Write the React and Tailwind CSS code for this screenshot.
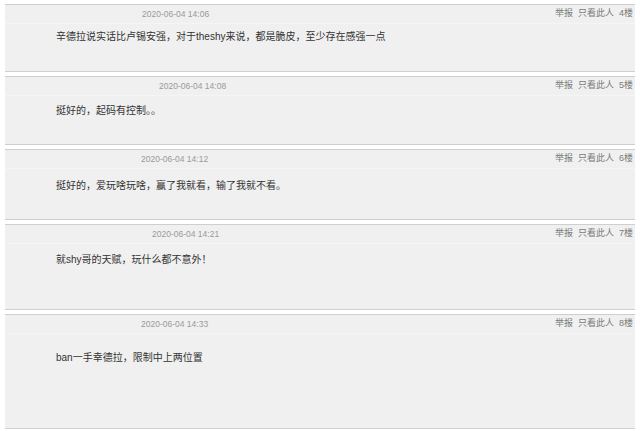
const posts = [
  { floor: 4, time: '2020-06-04 14:06', text: '辛德拉说实话比卢锡安强，对于theshy来说，都是脆皮，至少存在感强一点', mt: 'mt-[4px]', h: 'h-[68px]', tx: 'pl-[137px]', cp: 'pt-[6px]' },
  { floor: 5, time: '2020-06-04 14:08', text: '挺好的，起码有控制。。', mt: 'mt-[4px]', h: 'h-[69px]', tx: 'pl-[154px]', cp: 'pt-[8px]' },
  { floor: 6, time: '2020-06-04 14:12', text: '挺好的，爱玩啥玩啥，赢了我就看，输了我就不看。', mt: 'mt-[4px]', h: 'h-[71px]', tx: 'pl-[136px]', cp: 'pt-[10px]' },
  { floor: 7, time: '2020-06-04 14:21', text: '就shy哥的天赋，玩什么都不意外！', mt: 'mt-[4px]', h: 'h-[86px]', tx: 'pl-[147px]', cp: 'pt-[9px]' },
  { floor: 8, time: '2020-06-04 14:33', text: 'ban一手幸德拉，限制中上两位置', mt: 'mt-[4px]', h: 'h-[115px]', tx: 'pl-[136px]', cp: 'pt-[17px]' },
];

function Post({ p }) {
  return (
    <div className={`${p.mt} ${p.h} mx-[5px] bg-[#f0f0f0] border-t border-b border-[#cfcfcf] flex flex-col`}>
      <div className="h-[19px] flex items-center justify-between pr-[2px] border-b border-[#f5f5f5]">
        <span className={`${p.tx} text-[8.5px] text-[#9a9a9a] font-['Liberation_Sans',sans-serif]`}>{p.time}</span>
        <span className="text-[9px] text-[#7a7a7a] font-['Liberation_Sans','Noto_Sans_CJK_SC',sans-serif] flex gap-[5px]">
          <span>举报</span>
          <span>只看此人</span>
          <span>{p.floor}楼</span>
        </span>
      </div>
      <div className={`${p.cp} pl-[51px] text-[10px] leading-[14px] text-[#333] font-['Liberation_Sans','Noto_Sans_CJK_SC',sans-serif]`}>
        {p.text}
      </div>
    </div>
  );
}

export default function App() {
  return (
    <div className="w-[640px] h-[431px] bg-white overflow-hidden">
      {posts.map((p) => (
        <Post key={p.floor} p={p} />
      ))}
    </div>
  );
}
